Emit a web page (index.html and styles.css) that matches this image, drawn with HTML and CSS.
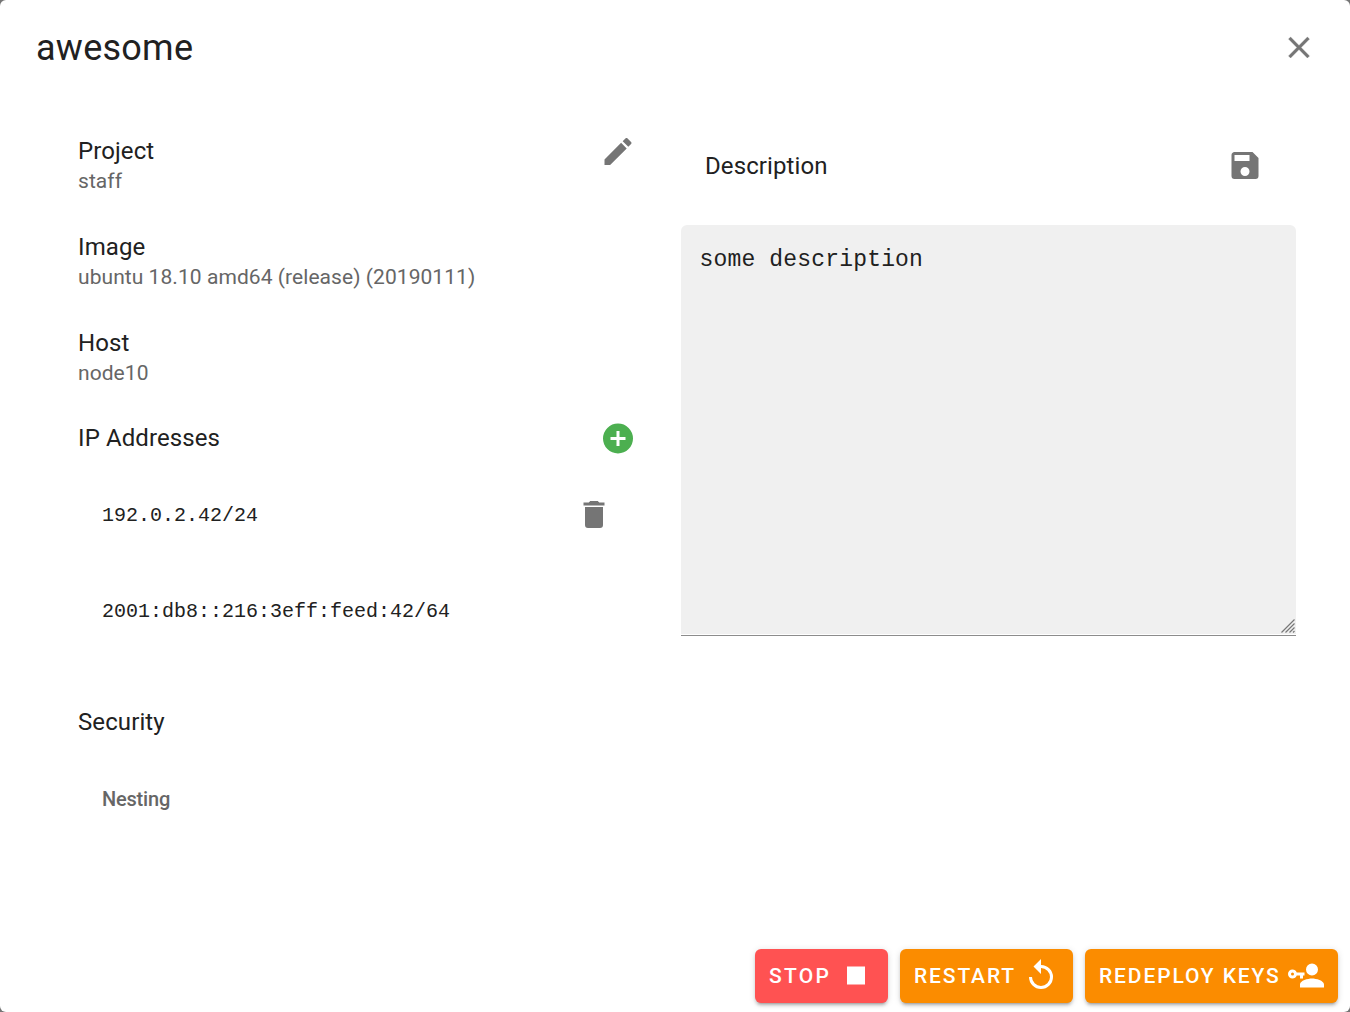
FILE: index.html
```html
<!DOCTYPE html>
<html lang="en">
<head>
<meta charset="utf-8">
<title>awesome</title>
<link rel="stylesheet" href="styles.css">
</head>
<body>
<main class="dialog">
  <header class="dialog-header">
    <h1 class="dialog-title">awesome</h1>
    <button class="icon-button" aria-label="Close"><svg class="icon icon-close" viewBox="0 0 24 24"><path d="M19,6.41L17.59,5L12,10.59L6.41,5L5,6.41L10.59,12L5,17.59L6.41,19L12,13.41L17.59,19L19,17.59L13.41,12L19,6.41Z"/></svg></button>
  </header>
  <div class="content">
    <section class="details">
      <div class="item">
        <div class="item-text"><div class="primary">Project</div><div class="secondary">staff</div></div>
        <button class="icon-button" aria-label="Edit"><svg class="icon icon-edit" viewBox="0 0 24 24"><path d="M20.71,7.04C21.1,6.65 21.1,6 20.71,5.63L18.37,3.29C18,2.9 17.35,2.9 16.96,3.29L15.12,5.12L18.87,8.87M3,17.25V21H6.75L17.81,9.93L14.06,6.18L3,17.25Z"/></svg></button>
      </div>
      <div class="item">
        <div class="item-text"><div class="primary">Image</div><div class="secondary">ubuntu 18.10 amd64 (release) (20190111)</div></div>
      </div>
      <div class="item">
        <div class="item-text"><div class="primary">Host</div><div class="secondary">node10</div></div>
      </div>
      <div class="subheader">
        <div class="primary">IP Addresses</div>
        <button class="icon-button" aria-label="Add"><svg class="icon icon-add" viewBox="0 0 24 24"><path d="M17,13H13V17H11V13H7V11H11V7H13V11H17M12,2A10,10 0 0,0 2,12A10,10 0 0,0 12,22A10,10 0 0,0 22,12A10,10 0 0,0 12,2Z"/></svg></button>
      </div>
      <div class="entry">
        <span class="address">192.0.2.42/24</span>
        <button class="icon-button" aria-label="Delete"><svg class="icon icon-delete" viewBox="0 0 24 24"><path d="M19,4H15.5L14.5,3H9.5L8.5,4H5V6H19M6,19A2,2 0 0,0 8,21H16A2,2 0 0,0 18,19V7H6V19Z"/></svg></button>
      </div>
      <div class="entry"><span class="address">2001:db8::216:3eff:feed:42/64</span></div>
      <div class="subheader subheader-security"><div class="primary">Security</div></div>
      <div class="entry"><span class="option">Nesting</span></div>
    </section>
    <section class="description">
      <div class="description-header">
        <div class="primary">Description</div>
        <button class="icon-button" aria-label="Save"><svg class="icon icon-save" viewBox="0 0 24 24"><path d="M15,9H5V5H15M12,19A3,3 0 0,1 9,16A3,3 0 0,1 12,13A3,3 0 0,1 15,16A3,3 0 0,1 12,19M17,3H5C3.89,3 3,3.9 3,5V19A2,2 0 0,0 5,21H19A2,2 0 0,0 21,19V7L17,3Z"/></svg></button>
      </div>
      <div class="field">
        <textarea class="field-input" spellcheck="false" aria-label="Description">some description</textarea>
        <svg class="grip" viewBox="0 0 14 14"><path d="M.5,13.5L13.5,.5M4.5,13.5L13.5,4.5M8.5,13.5L13.5,8.5M12,13.5L13.5,12"/></svg>
      </div>
    </section>
  </div>
  <footer class="actions">
    <button class="action action-stop">STOP<svg class="action-icon" viewBox="0 0 24 24"><path d="M18,18H6V6H18V18Z"/></svg></button>
    <button class="action action-restart">RESTART<svg class="action-icon" viewBox="0 0 24 24"><path d="M12,5V1L7,6L12,11V7A6,6 0 0,1 18,13A6,6 0 0,1 12,19A6,6 0 0,1 6,13H4A8,8 0 0,0 12,21A8,8 0 0,0 20,13A8,8 0 0,0 12,5Z"/></svg></button>
    <button class="action action-keys">REDEPLOY KEYS<svg class="action-icon" viewBox="0 0 24 24"><path d="M11,10V12H10V14H8V12H5.83C5.42,13.17 4.31,14 3,14A3,3 0 0,1 0,11A3,3 0 0,1 3,8C4.31,8 5.42,8.83 5.83,10H11M3,10A1,1 0 0,0 2,11A1,1 0 0,0 3,12A1,1 0 0,0 4,11A1,1 0 0,0 3,10M16,14C18.67,14 24,15.34 24,18V20H8V18C8,15.34 13.33,14 16,14M16,12A4,4 0 0,1 12,8A4,4 0 0,1 16,4A4,4 0 0,1 20,8A4,4 0 0,1 16,12Z"/></svg></button>
  </footer>
</main>
</body>
</html>
```
FILE: styles.css
```css
* { box-sizing: border-box; }

body {
  margin: 0;
  background: #757575;
  font-family: Roboto, sans-serif;
  color: #212121;
}

.dialog {
  display: flex;
  flex-direction: column;
  height: 1012px;
  background: #fff;
  border-radius: 6px;
}

.dialog-header {
  display: flex;
  align-items: center;
  justify-content: space-between;
  height: 95px;
  padding: 0 33px 0 36px;
}

.dialog-title {
  margin: 0;
  font-size: 36px;
  font-weight: 400;
  letter-spacing: 0.25px;
}

.icon-button {
  display: block;
  flex: none;
  padding: 0;
  border: 0;
  background: none;
}

.icon {
  display: block;
  width: 36px;
  height: 36px;
  fill: #757575;
}

.icon-add { fill: #4caf50; transform: translateY(0.5px); }
.icon-close path { stroke: #757575; stroke-width: 0.2px; }
.icon-close,
.icon-edit,
.icon-delete,
.icon-save { transform: translateY(-0.5px); }

.content {
  display: grid;
  grid-template-columns: 558px 615px;
  column-gap: 45px;
  flex: 1;
  padding: 23px 54px 0 78px;
}

.item {
  display: flex;
  align-items: flex-start;
  justify-content: space-between;
  height: 96px;
  padding-top: 16px;
}

.primary {
  font-size: 24px;
  line-height: 34px;
  letter-spacing: 0.1px;
}

.secondary {
  font-size: 21px;
  line-height: 26px;
  letter-spacing: 0.06px;
  color: #666;
}

.subheader {
  display: flex;
  align-items: center;
  justify-content: space-between;
  height: 58px;
  margin-top: 3px;
}

.subheader-security { margin-top: 34px; }

.entry {
  display: flex;
  align-items: center;
  justify-content: space-between;
  height: 96px;
  padding: 0 24px;
}

.address {
  font-family: "Liberation Mono", monospace;
  font-size: 20px;
}

.option {
  font-size: 20px;
  font-weight: 500;
  letter-spacing: -0.2px;
  color: #666;
}

.description-header {
  display: flex;
  align-items: center;
  justify-content: space-between;
  height: 96px;
  padding: 0 33px 0 24px;
}

.field {
  position: relative;
  height: 411px;
  margin-top: 11px;
  padding-bottom: 1px;
  border-bottom: 1px solid #8c8c8c;
}

.field-input {
  display: block;
  width: 100%;
  height: 100%;
  padding: 21px 18px 20px 18.5px;
  border: 0;
  border-radius: 6px 6px 0 0;
  outline: 0;
  background: #f0f0f0;
  color: #212121;
  font-family: "Liberation Mono", monospace;
  font-size: 23px;
  line-height: 28px;
  letter-spacing: 0.17px;
  resize: none;
}

.grip {
  position: absolute;
  right: 1px;
  bottom: 2px;
  width: 14px;
  height: 14px;
  fill: none;
  stroke: #777;
  stroke-width: 1.2px;
}

.actions {
  display: flex;
  justify-content: flex-end;
  gap: 12px;
  padding: 0 12px 9px;
}

.action {
  display: flex;
  align-items: center;
  justify-content: space-between;
  height: 54px;
  padding: 0 14px;
  border: 0;
  border-radius: 6px;
  background: #fb8c00;
  color: #fff;
  font-family: Roboto, sans-serif;
  font-size: 21px;
  font-weight: 500;
  letter-spacing: 1.87px;
  white-space: nowrap;
  box-shadow: 0 4px 2px -3px rgba(0, 0, 0, 0.2), 0 3px 3px rgba(0, 0, 0, 0.14), 0 1px 7px rgba(0, 0, 0, 0.12);
}

.action-stop { width: 133px; letter-spacing: 2.3px; background: #ff5252; }
.action-restart { width: 173px; }
.action-keys { width: 253px; }

.action-icon {
  flex: none;
  width: 36px;
  height: 36px;
  fill: #fff;
  transform: translateY(-0.5px);
}
```
